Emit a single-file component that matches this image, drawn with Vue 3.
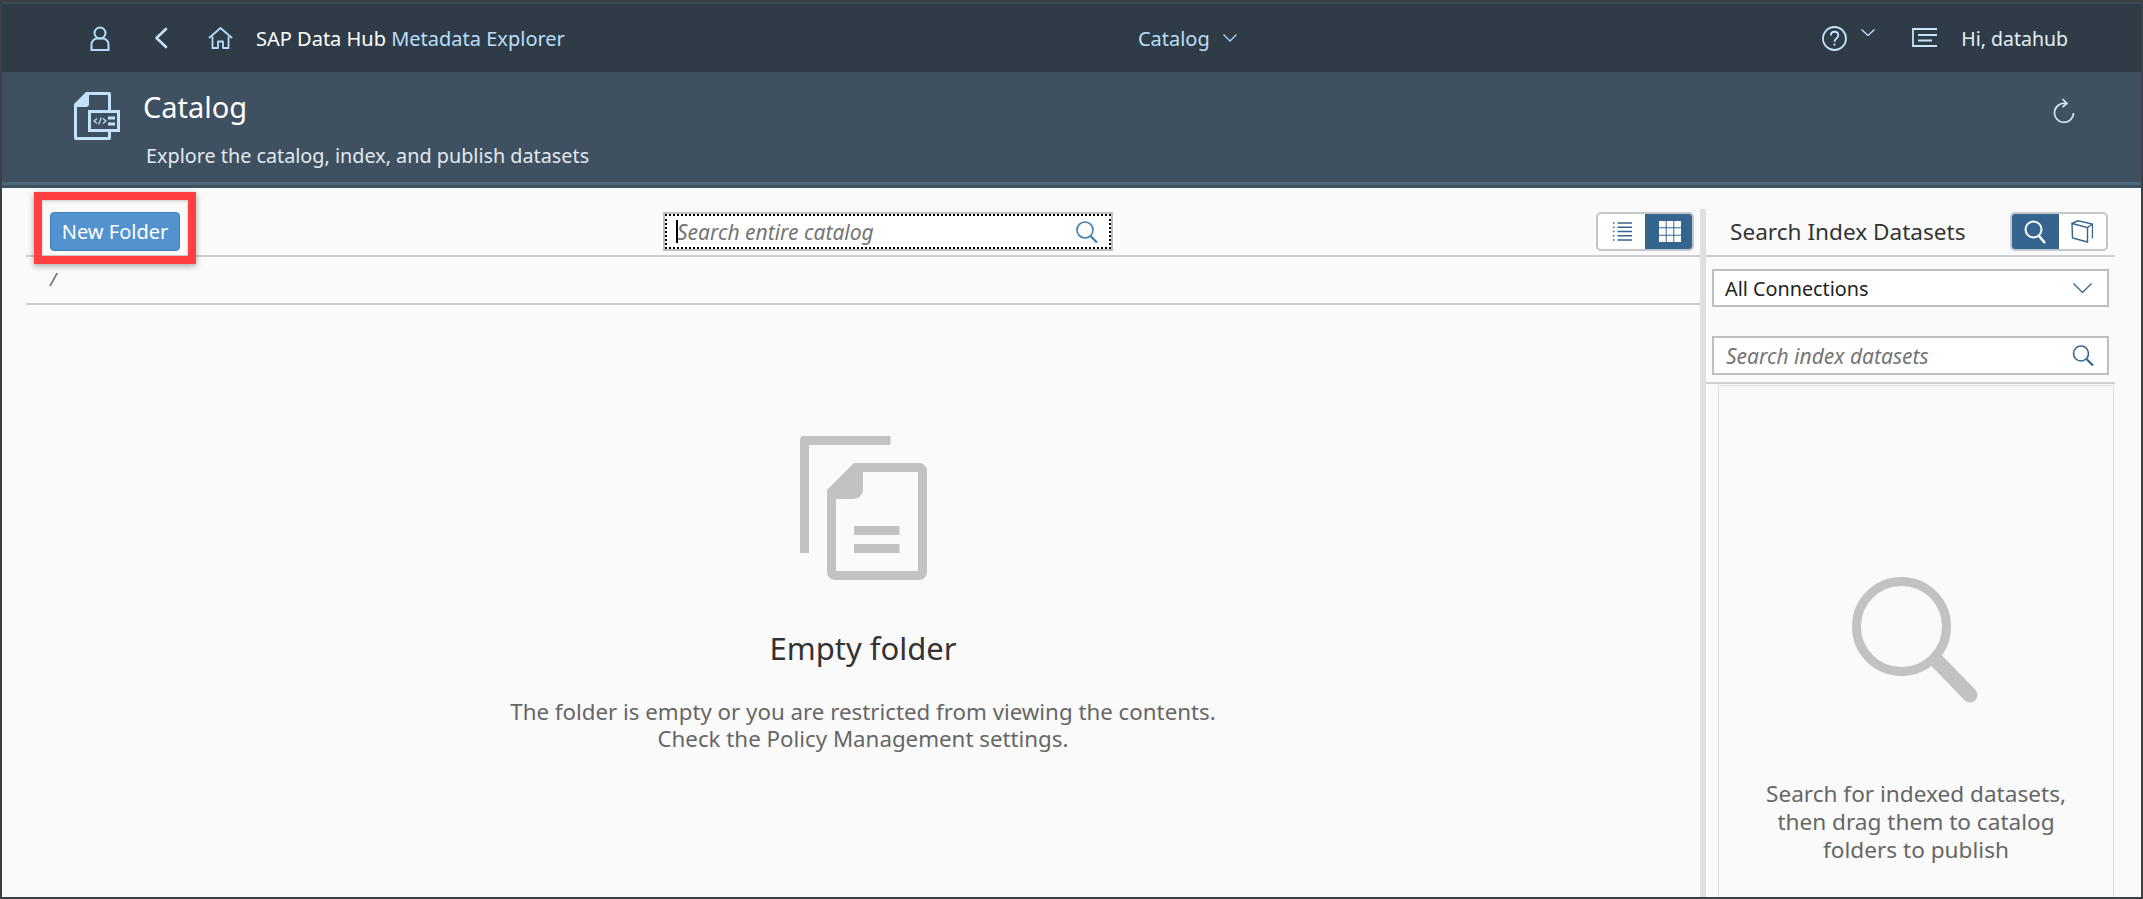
<template>
  <div class="frame">
    <header class="shell">
      <div class="shell-left">
        <svg class="ic-person" width="20" height="25" viewBox="0 0 20 25" fill="none" stroke="#b5dcf9" stroke-width="2">
          <circle cx="10" cy="7" r="5.5" />
          <path d="M1.5 24V18.5a6 6 0 0 1 6-6h5a6 6 0 0 1 6 6V24Z" />
        </svg>
        <svg class="ic-back" width="14" height="22" viewBox="0 0 14 22" fill="none" stroke="#c5e3fa" stroke-width="2.6" stroke-linecap="round" stroke-linejoin="round">
          <path d="M12 2 2.5 11 12 20" />
        </svg>
        <svg class="ic-home" width="25" height="22" viewBox="0 0 25 22" fill="none" stroke="#b5dcf9" stroke-width="1.8" stroke-linejoin="round">
          <path d="M1 11 12.5 1 24 11" />
          <path d="M4.5 9.5V21H10V14.5H15V21H20.5V9.5" />
        </svg>
        <span class="app-name">SAP Data Hub <em>Metadata Explorer</em></span>
      </div>
      <div class="shell-nav">
        <span>Catalog</span>
        <svg width="14" height="8" viewBox="0 0 14 8" fill="none" stroke="#a9d6f7" stroke-width="1.3">
          <path d="M.5.5 7 7 13.5.5" />
        </svg>
      </div>
      <div class="shell-right">
        <svg width="25" height="25" viewBox="0 0 25 25" fill="none" stroke="#c5e3fa" stroke-width="1.8">
          <circle cx="12.5" cy="12.5" r="11.500" />
          <path d="M8.8 9.5c0-5 7.5-5 7.5 0 0 3-3.800 3-3.800 6.200" />
          <path d="M12.500 17.500v2" />
        </svg>
        <svg class="ic-small" width="14" height="7" viewBox="0 0 14 7" fill="none" stroke="#c5e3fa" stroke-width="1.300">
          <path d="M.5.5 7 6.500 13.500.5" />
        </svg>
        <svg class="ic-menu" width="25" height="19" viewBox="0 0 25 19" fill="none" stroke="#c5e3fa" stroke-width="1.800">
          <path d="M25 1H1v17h24M6 7h19M6 12.500h14" />
        </svg>
        <span class="user">Hi, datahub</span>
      </div>
    </header>

    <div class="title-bar">
      <svg class="ic-file" width="47" height="48" viewBox="0 0 47 48">
        <path d="M13 0H36a2 2 0 0 1 2 2V18H35V3H16V12a3 3 0 0 1-3 3H4V45H35V39H38V46a2 2 0 0 1-2 2H3a2 2 0 0 1-2-2V12Z" fill="#c4e2fb" />
        <rect x="16.500" y="19.500" width="29" height="19" fill="none" stroke="#c4e2fb" stroke-width="3" />
        <path d="M24 26.500 21 29l3 2.500M30 26.500 33 29l-3 2.500M28.300 25.500 25.700 32.500" fill="none" stroke="#c4e2fb" stroke-width="1.200" />
        <path d="M35 24.500h7v3h-7zM35 30.500h7v3h-7z" fill="#c4e2fb" />
      </svg>
      <div class="title-text">
        <h1>Catalog</h1>
        <p>Explore the catalog, index, and publish datasets</p>
      </div>
      <svg class="ic-refresh" width="22" height="25" viewBox="0 0 22 25" fill="none" stroke="#dbeaf6" stroke-width="1.600">
        <path d="M13 5.500A9.500 9.500 0 1 0 20.500 15" />
        <path d="M9.500 1 14 5.500 9.500 9" />
      </svg>
    </div>
    <div class="title-stripe"></div>

    <main class="main">
      <section class="left-pane">
        <div class="toolbar">
          <button class="new-folder">New Folder</button>
          <div class="search focused">
            <i class="caret"></i>
            <input type="text" placeholder="Search entire catalog" readonly />
            <svg width="22" height="22" viewBox="0 0 22 22" fill="none" stroke="#3f7fb0" stroke-width="1.600">
              <circle cx="9" cy="9" r="8" />
              <path d="M14.500 15 21 21.500" stroke-width="2.200" />
            </svg>
          </div>
          <div class="toggle">
            <span class="seg">
              <svg width="19" height="19" viewBox="0 0 19 19" fill="none" stroke="#35648f" stroke-width="1.300">
                <path d="M0 1h1.500M4.500 1H19M0 5.250h1.500M4.500 5.250H19M0 9.500h1.500M4.500 9.500H19M0 13.750h1.500M4.500 13.750H19M0 18h1.500M4.500 18H19" />
              </svg>
            </span>
            <span class="seg on">
              <svg width="22" height="21" viewBox="0 0 22 21" fill="#fff">
                <path d="M0 0h6.700v6.300H0zM7.700 0h6.600v6.300H7.700zM15.300 0H22v6.300h-6.700zM0 7.300h6.700v6.400H0zM7.700 7.300h6.600v6.400H7.700zM15.300 7.300H22v6.400h-6.700zM0 14.700h6.700V21H0zM7.700 14.700h6.600V21H7.700zM15.300 14.700H22V21h-6.700z" />
              </svg>
            </span>
          </div>
        </div>
        <div class="crumb"><span>/</span></div>
        <div class="empty">
          <svg width="127" height="144" viewBox="0 0 127 144" fill="#c2c2c2">
            <path d="M4 0H90.500V9H9V117H0V4a4 4 0 0 1 4-4Z" />
            <path fill-rule="evenodd" d="M54 27H119a8 8 0 0 1 8 8V136a8 8 0 0 1-8 8H35a8 8 0 0 1-8-8V54ZM36 63V135H118V36H63V54a9 9 0 0 1-9 9ZM54 90H99.500V99H54ZM54 108H99.500V117H54Z" />
          </svg>
          <h2>Empty folder</h2>
          <p>The folder is empty or you are restricted from viewing the contents.<br />Check the Policy Management settings.</p>
        </div>
      </section>

      <div class="splitter"></div>

      <aside class="right-pane">
        <div class="right-head">
          <h3>Search Index Datasets</h3>
          <div class="toggle">
            <span class="seg on">
              <svg width="22" height="24" viewBox="0 0 22 24" fill="none" stroke="#fff" stroke-width="2">
                <circle cx="9.500" cy="9.500" r="8" />
                <path d="M15 16 21 23" stroke-width="2.600" />
              </svg>
            </span>
            <span class="seg">
              <svg width="22" height="23" viewBox="0 0 22 23" fill="none" stroke="#35648f" stroke-width="1.400">
                <path d="M1 3.500 16.500 7.500V22L1.500 18Z" />
                <path d="M1 3.500 7 .8 21.500 4V18.500M16.500 7.500 21.500 4" />
              </svg>
            </span>
          </div>
        </div>
        <div class="select">
          <span>All Connections</span>
          <svg width="19" height="10" viewBox="0 0 19 10" fill="none" stroke="#35648f" stroke-width="1.300">
            <path d="M.5.500 9.500 9.500 18.500.500" />
          </svg>
        </div>
        <div class="search index">
          <input type="text" placeholder="Search index datasets" readonly />
          <svg width="22" height="21" viewBox="0 0 22 21" fill="none" stroke="#35648f" stroke-width="1.600">
            <circle cx="9" cy="8.500" r="7.500" />
            <path d="M14.500 14 21 20.500" stroke-width="2.200" />
          </svg>
        </div>
        <div class="right-rule"></div>
        <div class="hint">
          <svg width="126" height="127" viewBox="0 0 126 127" fill="none" stroke="#c2c2c2">
            <circle cx="49.500" cy="49.500" r="45" stroke-width="9" />
            <path d="M85 84 118 118" stroke-width="15" stroke-linecap="round" />
          </svg>
          <p>Search for indexed datasets,<br />then drag them to catalog<br />folders to publish</p>
        </div>
      </aside>
    </main>

    <div class="callout"></div>
  </div>
</template>

<script setup>
</script>

<style>
html,
body {
  margin: 0;
  background: #fafafa;
}
</style>

<style scoped>
* {
  box-sizing: border-box;
}

.frame {
  position: relative;
  width: 2143px;
  height: 899px;
  border: 2px solid #3d4042;
  display: flex;
  flex-direction: column;
  overflow: hidden;
  font-family: "Noto Sans", sans-serif;
  background: #fafafa;
}

.shell {
  height: 70px;
  flex: none;
  background: #2f3c48;
  border-top: 2px solid #3c4a57;
  display: flex;
  align-items: center;
  padding-left: 88px;
}

.shell-left {
  display: flex;
  align-items: center;
}

.ic-back {
  margin-left: 44px;
}

.ic-home {
  margin-left: 40px;
}

.app-name {
  margin-left: 23px;
  font-size: 20px;
  color: #fff;
}

.app-name em {
  font-style: normal;
  color: #bcdff9;
}

.shell-nav {
  margin-left: 573px;
  display: flex;
  align-items: center;
  gap: 13px;
  font-size: 20px;
  color: #bcdff9;
}

.shell-right {
  margin-left: auto;
  margin-right: 73px;
  display: flex;
  align-items: center;
  color: #e4eef6;
  font-size: 19.500px;
}

.ic-small {
  margin-left: 14px;
  margin-top: -12px;
}

.ic-menu {
  margin-left: 37px;
  margin-top: -2px;
}

.user {
  margin-left: 24px;
}

.title-bar {
  height: 110px;
  flex: none;
  background: #3f5161;
  display: flex;
  align-items: flex-start;
  padding-left: 71px;
  padding-right: 66px;
}

.ic-file {
  margin-top: 20px;
}

.title-text {
  margin-left: 23px;
}

.title-text h1 {
  margin: 17px 0 0;
  font-size: 29px;
  line-height: 36px;
  font-weight: 400;
  color: #fff;
}

.title-text p {
  margin: 19px 0 0 3px;
  font-size: 19.800px;
  line-height: 24px;
  color: #e2e9ef;
}

.ic-refresh {
  margin-left: auto;
  margin-top: 26px;
}

.title-stripe {
  height: 6px;
  flex: none;
  background: #3f5161;
  border-top: 3px solid #4d667c;
}

.main {
  flex: 1;
  min-height: 0;
  display: flex;
  padding-top: 21px;
  padding-right: 26px;
}

.left-pane {
  flex: 1;
  min-width: 0;
  padding-left: 24px;
  display: flex;
  flex-direction: column;
}

.toolbar {
  height: 48px;
  flex: none;
  padding: 3px 6px 0 24px;
  border-bottom: 2px solid #cfcfcf;
  display: flex;
  align-items: flex-start;
}

.new-folder {
  width: 130px;
  height: 39px;
  border: 1px solid #3f82bb;
  border-radius: 4px;
  background: #5293cf;
  color: #fff;
  font: 20px "Noto Sans", sans-serif;
  padding: 0;
}

.search {
  position: relative;
  height: 39px;
  border: 2px solid #bfbfbf;
  background: #fff;
  display: flex;
  align-items: center;
}

.search input {
  flex: 1;
  min-width: 0;
  height: 100%;
  border: 0;
  outline: 0;
  padding: 0;
  background: transparent;
  font: italic 21px "Noto Sans", sans-serif;
}

.search input::placeholder {
  color: #757575;
  opacity: 1;
}

.focused {
  margin-left: 483px;
  width: 450px;
  padding: 0 13px 0 12px;
  outline: 2px dotted #000;
  outline-offset: -4px;
}

.caret {
  position: absolute;
  left: 11px;
  top: 6px;
  width: 2px;
  height: 23px;
  background: #000;
}

.toggle {
  margin-left: auto;
  width: 98px;
  height: 39px;
  border: 2px solid #c4c7ca;
  border-radius: 5px;
  background: #fff;
  display: flex;
  overflow: hidden;
}

.seg {
  flex: 1;
  display: flex;
  align-items: center;
  justify-content: center;
}

.seg.on {
  background: #35648f;
  margin: -2px;
}

.crumb {
  height: 48px;
  flex: none;
  border-bottom: 2px solid #cfcfcf;
  padding-left: 24px;
  padding-top: 10px;
  font-size: 18px;
  line-height: 24px;
  font-style: italic;
  color: #666;
}

.empty {
  padding-top: 131px;
  display: flex;
  flex-direction: column;
  align-items: center;
  text-align: center;
}

.empty h2 {
  margin: 49px 0 0;
  font-size: 31px;
  line-height: 38px;
  font-weight: 400;
  color: #333;
}

.empty p {
  margin: 31px 0 0;
  font-size: 22.300px;
  line-height: 27px;
  color: #666;
}

.splitter {
  width: 6px;
  flex: none;
  background: #e0e0e0;
}

.right-pane {
  width: 409px;
  flex: none;
  display: flex;
  flex-direction: column;
}

.right-head {
  height: 48px;
  flex: none;
  padding: 3px 7px 0 24px;
  border-bottom: 2px solid #cfcfcf;
  display: flex;
  align-items: flex-start;
}

.right-head h3 {
  margin: 0;
  font-size: 22.600px;
  line-height: 39px;
  font-weight: 400;
  color: #333;
}

.select {
  flex: none;
  margin: 12px 6px 0;
  height: 38px;
  border: 2px solid #bfbfbf;
  background: #fff;
  display: flex;
  align-items: center;
  justify-content: space-between;
  padding: 0 15px 0 11px;
  font-size: 19.800px;
  color: #222;
}

.index {
  flex: none;
  margin: 29px 6px 0;
  padding: 0 13px 0 12px;
}

.right-rule {
  height: 2px;
  flex: none;
  margin-top: 7px;
  background: #cfcfcf;
}

.hint {
  flex: 1;
  margin: 1px 1px 0 12px;
  padding-top: 191px;
  border: 1px solid #e2e2e2;
  border-bottom: 0;
  display: flex;
  flex-direction: column;
  align-items: center;
  text-align: center;
}

.hint svg {
  margin-left: -3px;
}

.hint p {
  margin: 76px 0 0;
  font-size: 22.600px;
  line-height: 28px;
  color: #666;
}

.callout {
  position: absolute;
  left: 32px;
  top: 190px;
  width: 162px;
  height: 72px;
  border: 8px solid #ff4040;
  box-shadow: 0 2px 6px rgba(0, 0, 0, 0.35), inset 0 1px 3px rgba(0, 0, 0, 0.2);
}
</style>
